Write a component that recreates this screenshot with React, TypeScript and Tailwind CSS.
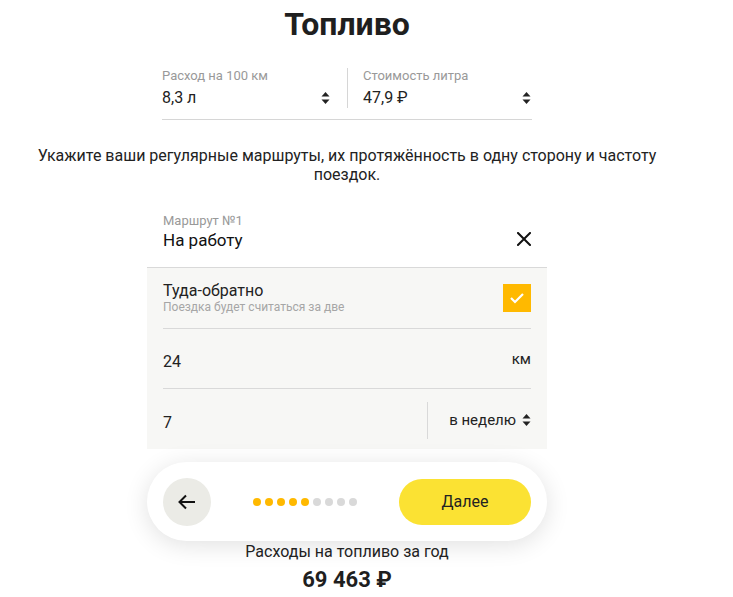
import { useState } from "react";

function Stepper() {
  return (
    <svg width="9" height="14" viewBox="0 0 9 14" className="shrink-0">
      <path d="M4.5 1 L8.5 5.5 H0.5 Z" fill="#222" />
      <path d="M4.5 13 L8.5 8.5 H0.5 Z" fill="#222" />
    </svg>
  );
}

const steps = [1, 1, 1, 1, 1, 0, 0, 0, 0];

export default function App() {
  const [roundTrip, setRoundTrip] = useState(true);

  return (
    <div className="w-full min-h-[597px] bg-white">
      <div
        className="w-[694px] flex flex-col items-center text-[#222]"
        style={{ fontFamily: "Roboto, 'Noto Sans', sans-serif" }}
      >
        <h1 className="pt-[5px] text-[32px] leading-[38px] font-bold text-[#1f1f1f]">Топливо</h1>

        {/* consumption + price */}
        <div className="mt-[25px] w-[370px] flex border-b border-[#d6d6d6] pb-[11px]">
          <div className="w-[186px] pr-[17px] flex items-end justify-between border-r border-[#d6d6d6]">
            <div className="flex flex-col">
              <span className="text-[13px] leading-[16px] text-[#999]">Расход на 100 км</span>
              <span className="mt-[4px] text-[16px] leading-[20px]">8,3 л</span>
            </div>
            <div className="mb-[3px]"><Stepper /></div>
          </div>
          <div className="flex-1 pl-[15px] pr-[1px] flex items-end justify-between">
            <div className="flex flex-col">
              <span className="text-[13px] leading-[16px] text-[#999]">Стоимость литра</span>
              <span className="mt-[4px] text-[16px] leading-[20px]">47,9 ₽</span>
            </div>
            <div className="mb-[3px]"><Stepper /></div>
          </div>
        </div>

        <p className="mt-[26px] w-[660px] text-center text-[16px] leading-[19px] text-[#222]">
          Укажите ваши регулярные маршруты, их протяжённость в одну сторону и частоту поездок.
        </p>

        {/* route card */}
        <div className="mt-[19px] w-[400px]">
          <div className="px-[16px] pt-[10px] pb-[17px] flex items-end justify-between">
            <div className="flex flex-col">
              <span className="text-[13px] leading-[16px] text-[#999]">Маршрут №1</span>
              <span className="mt-[1px] text-[17px] leading-[20px] text-[#111]">На работу</span>
            </div>
            <button className="mb-[4px]">
              <svg width="14" height="14" viewBox="0 0 14 14">
                <path d="M1 1 L13 13 M13 1 L1 13" stroke="#111" strokeWidth="2" strokeLinecap="square" />
              </svg>
            </button>
          </div>

          <div className="bg-[#f7f7f5] border-t border-[#d9d9d9] px-[16px]">
            <div className="h-[61px] flex items-center justify-between border-b border-[#d9d9d9]">
              <div className="flex flex-col">
                <span className="text-[16px] leading-[19px] text-[#222]">Туда-обратно</span>
                <span className="text-[12px] leading-[15px] text-[#a6a6a6]">Поездка будет считаться за две</span>
              </div>
              <button
                onClick={() => setRoundTrip(!roundTrip)}
                className="w-[28px] h-[28px] flex items-center justify-center bg-[#ffb900]"
              >
                {roundTrip && (
                  <svg width="16" height="12" viewBox="0 0 16 12">
                    <path d="M2 6 L6 10 L14 2" stroke="#fff" strokeWidth="2.2" fill="none" />
                  </svg>
                )}
              </button>
            </div>

            <div className="h-[60px] flex items-center justify-between border-b border-[#d9d9d9] pt-[6px]">
              <span className="text-[16px] text-[#222]">24</span>
              <span className="text-[15px] text-[#222] -mt-[4px]">км</span>
            </div>

            <div className="h-[60px] flex items-center justify-between pt-[8px]">
              <span className="text-[16px] text-[#222]">7</span>
              <div className="flex items-center h-[37px] border-l border-[#d9d9d9] pl-[21px] -mt-[6px]">
                <span className="text-[15px] text-[#222] mr-[6px]">в неделю</span>
                <Stepper />
              </div>
            </div>
          </div>
        </div>

        {/* bottom nav */}
        <div className="mt-[13px] w-[400px] h-[79px] rounded-full bg-white shadow-[0_4px_24px_rgba(0,0,0,0.12)] flex items-center px-[16px]">
          <button className="w-[48px] h-[48px] rounded-full bg-[#ebebe6] flex items-center justify-center">
            <svg width="18" height="16" viewBox="0 0 18 16">
              <path d="M17 8 H2 M8 1.5 L1.5 8 L8 14.5" stroke="#111" strokeWidth="2" fill="none" />
            </svg>
          </button>
          <div className="flex gap-[4px] ml-[42px]">
            {steps.map((s, i) => (
              <span
                key={i}
                className={s ? "w-[8px] h-[8px] rounded-full bg-[#ffb900]" : "w-[8px] h-[8px] rounded-full bg-[#d9d9d9]"}
              />
            ))}
          </div>
          <button className="ml-auto w-[132px] h-[46px] rounded-full bg-[#fbe233] text-[16px] text-[#222]">Далее</button>
        </div>

        <div className="mt-[1px] text-[16px] leading-[19px] text-[#222]">Расходы на топливо за год</div>
        <div className="mt-[6px] text-[22px] leading-[26px] font-bold text-[#1f1f1f]">69 463 ₽</div>
      </div>
    </div>
  );
}
